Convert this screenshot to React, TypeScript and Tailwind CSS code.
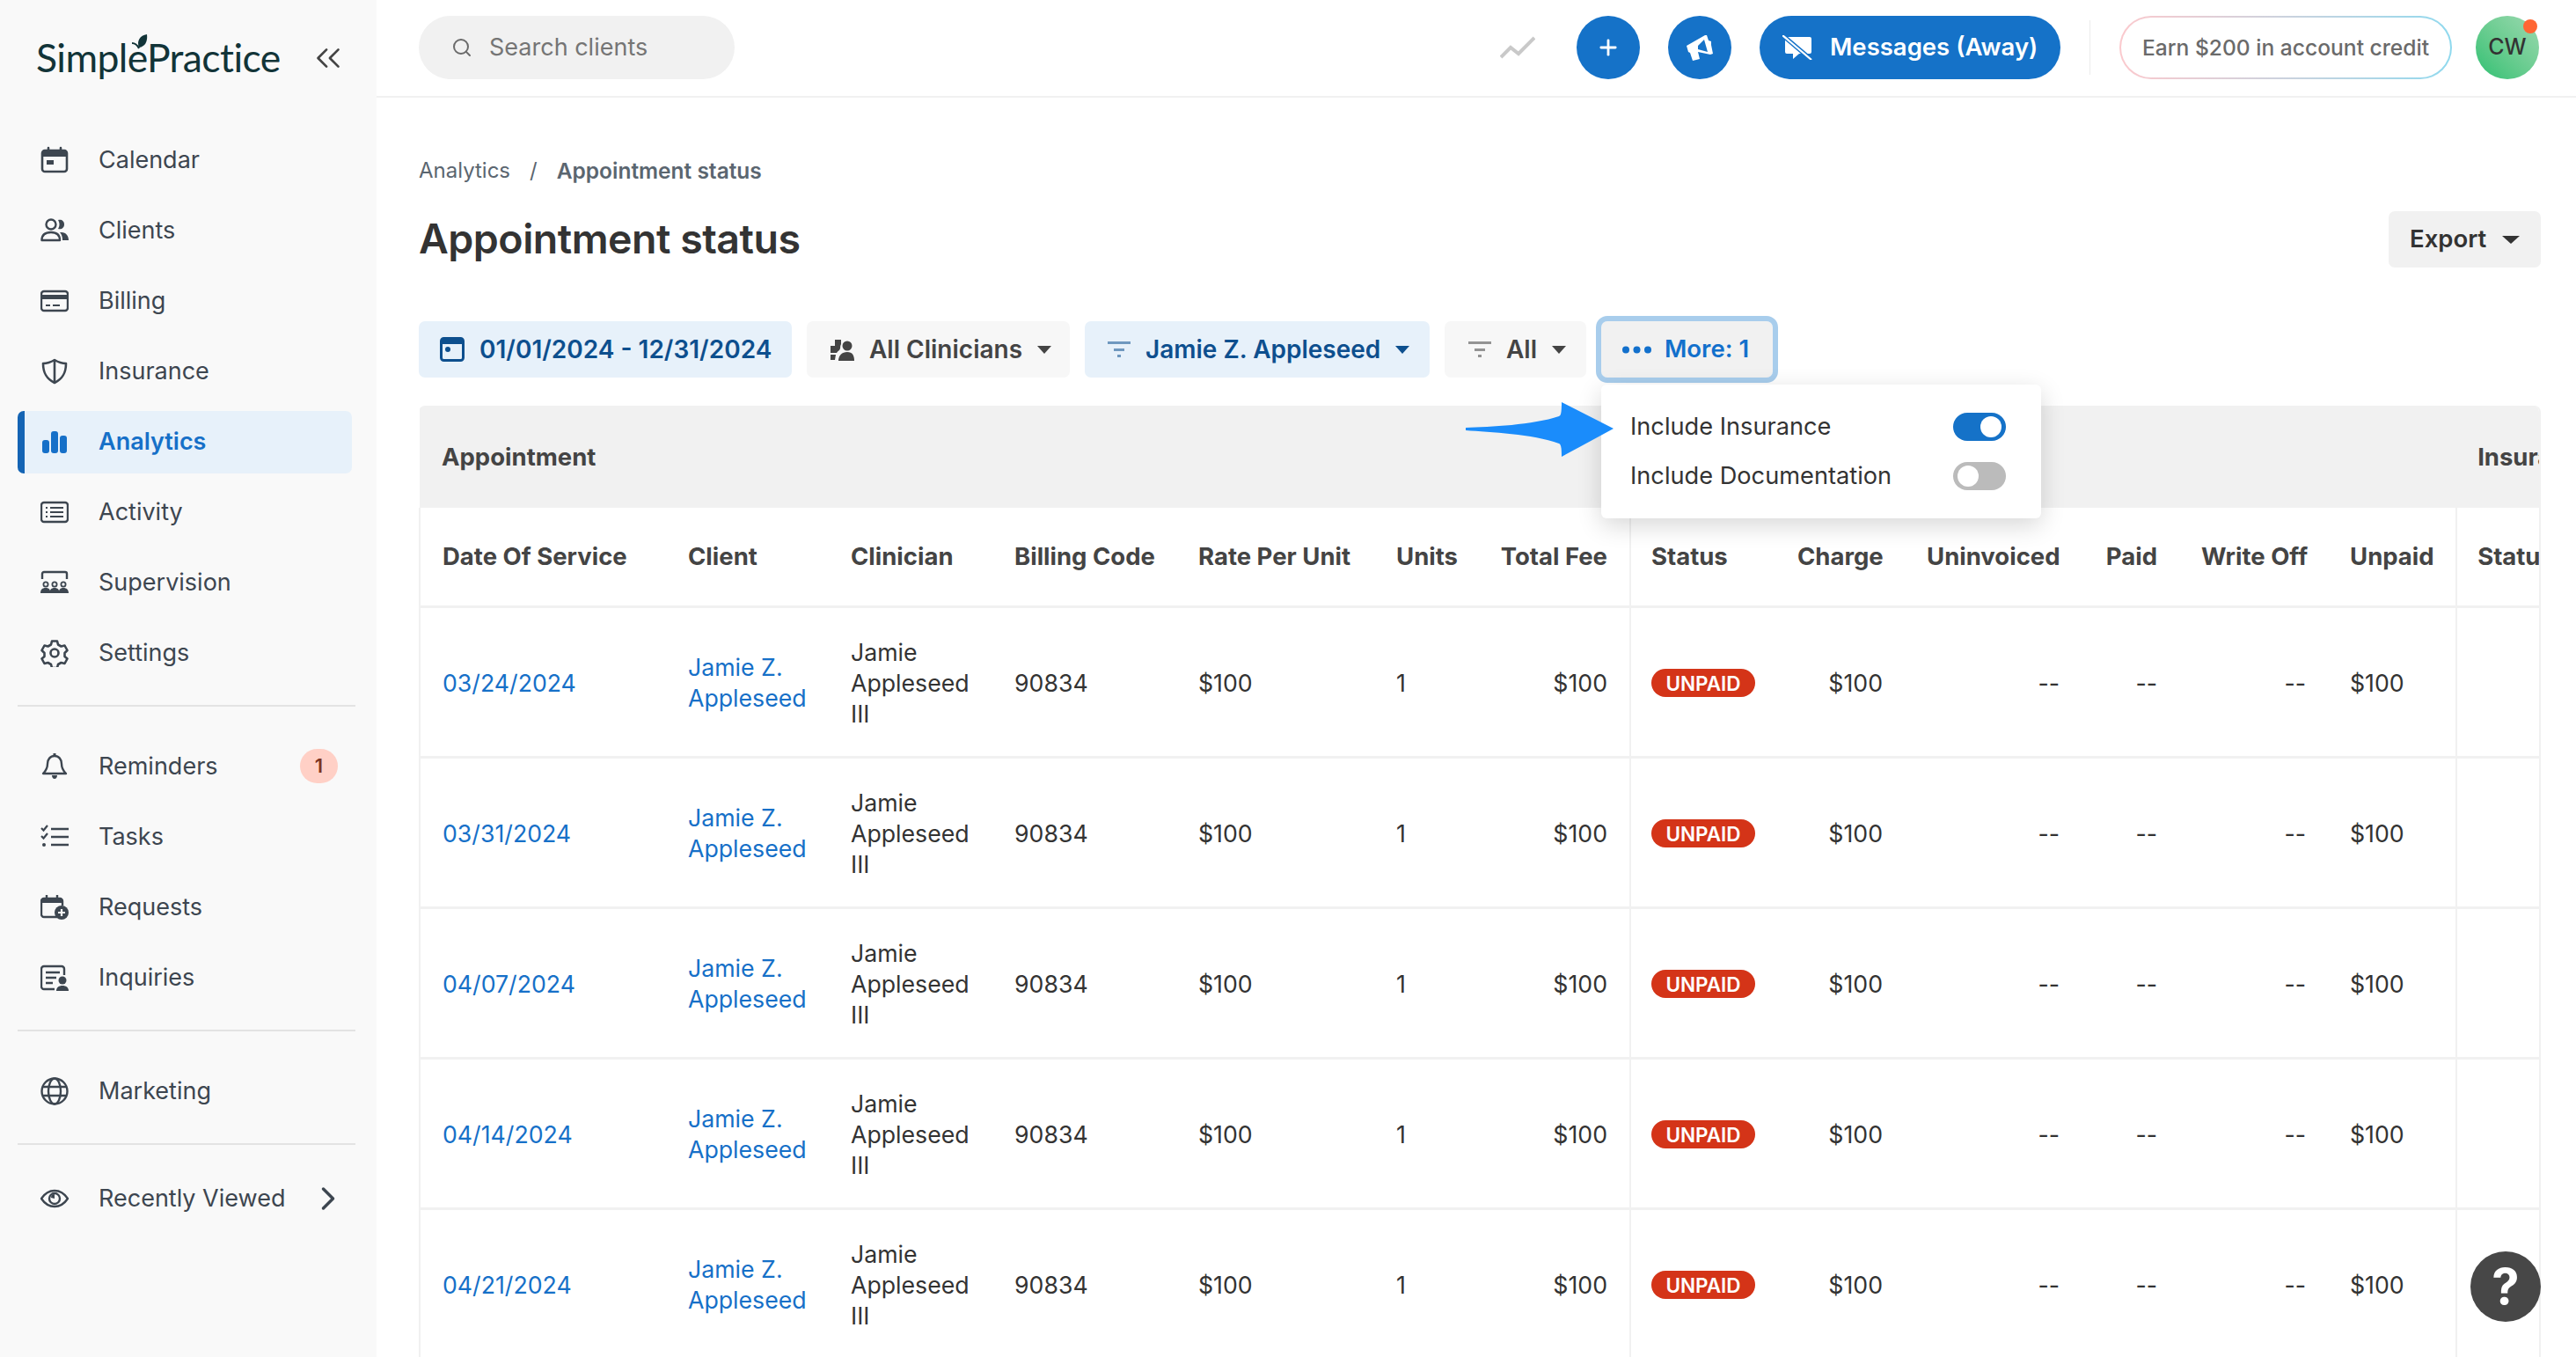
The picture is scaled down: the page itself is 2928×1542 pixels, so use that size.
import type { ReactNode } from "react";
import { ChevronRight, ChevronsLeft, Plus, Search } from "lucide-react";

const ink = "#3d4650";

function Svg({ children, w = 32, h = 32, className = "" }: { children: ReactNode; w?: number; h?: number; className?: string }) {
  return (
    <svg width={w} height={h} viewBox={`0 0 ${w} ${h}`} fill="none" className={`shrink-0 ${className}`}>
      {children}
    </svg>
  );
}

const CalendarIcon = () => (
  <Svg>
    <rect x="2" y="5" width="28" height="24" rx="3" stroke={ink} strokeWidth="2.6" />
    <path d="M2 6h28v6H2z" fill={ink} />
    <path d="M9 2v5M23 2v5" stroke={ink} strokeWidth="2.6" strokeLinecap="round" />
    <rect x="7" y="16" width="8" height="5" fill={ink} />
  </Svg>
);
const ClientsIcon = () => (
  <Svg>
    <circle cx="12" cy="9" r="5.5" stroke={ink} strokeWidth="2.4" />
    <path d="M1.5 27c0-6 4-9 10.500-9s10 3 10 9z" stroke={ink} strokeWidth="2.4" strokeLinejoin="round" />
    <path d="M20 4c4-1 7 1 7 5s-3 6-7 5c2-3 2-7 0-10zM24 18c5 0 8 4 8 9h-7c0-4-1-7-3-9z" fill={ink} />
  </Svg>
);
const BillingIcon = () => (
  <Svg>
    <rect x="1" y="5" width="30" height="22" rx="3" stroke={ink} strokeWidth="2.4" />
    <path d="M1 9h30v5H1z" fill={ink} />
    <path d="M6 21h5M14 21h8" stroke={ink} strokeWidth="2.2" />
  </Svg>
);
const InsuranceIcon = () => (
  <Svg>
    <path d="M16 3c5 3 9 4 13 4 0 10-3 17-13 22C6 24 3 17 3 7c4 0 8-1 13-4zM16 3v26" stroke={ink} strokeWidth="2.6" strokeLinejoin="round" />
  </Svg>
);
const AnalyticsIcon = () => (
  <Svg>
    <rect x="2" y="14" width="8" height="15" rx="3" fill="#1670c8" />
    <rect x="12" y="4" width="8" height="25" rx="3" fill="#1670c8" />
    <rect x="22" y="9" width="8" height="20" rx="3" fill="#1670c8" />
  </Svg>
);
const ActivityIcon = () => (
  <Svg>
    <rect x="1" y="5" width="30" height="22" rx="3" stroke={ink} strokeWidth="2.4" />
    <path d="M6 11h2M6 16h2M6 21h2M11 11h15M11 16h15M11 21h15" stroke={ink} strokeWidth="2.2" />
  </Svg>
);
const SupervisionIcon = () => (
  <Svg>
    <path d="M2 12V6a2 2 0 0 1 2-2h24a2 2 0 0 1 2 2v6" stroke={ink} strokeWidth="2.4" />
    <circle cx="6" cy="18" r="2.600" stroke={ink} strokeWidth="1.800" />
    <circle cx="16" cy="18" r="2.600" stroke={ink} strokeWidth="1.800" />
    <circle cx="26" cy="18" r="2.600" stroke={ink} strokeWidth="1.800" />
    <path d="M0 28c0-4 2-6 6-6s5 2 5.500 6zM10.500 28c0-4 2-6 5.500-6s5.500 2 5.500 6zM20.500 28c.5-4 2-6 5.500-6s6 2 6 6z" fill={ink} />
  </Svg>
);
const SettingsIcon = () => (
  <Svg>
    <circle cx="16" cy="16" r="4.500" stroke={ink} strokeWidth="2.600" />
    <path d="M13 2.500h6l1 4 3.500 2 4-1 3 5.500-3 3v4l3 2.500-3 5.500-4-1-3.500 2-1 4h-6l-1-4-3.500-2-4 1-3-5.500 3-2.500v-4l-3-3 3-5.500 4 1 3.500-2z" stroke={ink} strokeWidth="2.600" strokeLinejoin="round" />
  </Svg>
);
const BellIcon = () => (
  <Svg>
    <path d="M16 4c-5 0-8 4-8 9 0 5-2 8-5 11h26c-3-3-5-6-5-11 0-5-3-9-8-9z" stroke={ink} strokeWidth="2.400" strokeLinejoin="round" />
    <path d="M13 26h6c0 2-1 4-3 4s-3-2-3-4zM14.500 1h3v3h-3z" fill={ink} />
  </Svg>
);
const TasksIcon = () => (
  <Svg>
    <path d="M1 6l2.500 2.500L8 3M1 15l2.500 2.500L8 12" stroke={ink} strokeWidth="2.200" />
    <circle cx="4" cy="25" r="2" fill={ink} />
    <path d="M12 7h20M12 16h20M12 25h20" stroke={ink} strokeWidth="2.400" />
  </Svg>
);
const RequestsIcon = () => (
  <Svg>
    <path d="M19 27H4a3 3 0 0 1-3-3V9a3 3 0 0 1 3-3h18a3 3 0 0 1 3 3v5" stroke={ink} strokeWidth="2.400" />
    <path d="M2 6h23v5H2z" fill={ink} />
    <path d="M7 2v5M19 2v5" stroke={ink} strokeWidth="2.400" />
    <circle cx="24" cy="22" r="8" fill={ink} />
    <path d="M24 18v8M20 22h8" stroke="#f9f9f9" strokeWidth="2.200" />
  </Svg>
);
const InquiriesIcon = () => (
  <Svg>
    <path d="M16 29H4a3 3 0 0 1-3-3V6a3 3 0 0 1 3-3h20a3 3 0 0 1 3 3v7" stroke={ink} strokeWidth="2.400" />
    <path d="M6 10h16M6 16h12M6 22h8" stroke={ink} strokeWidth="2.400" />
    <circle cx="25" cy="19" r="4.500" fill={ink} />
    <path d="M18 31c0-4 3-6 7-6s7 2 7 6z" fill={ink} />
  </Svg>
);
const GlobeIcon = () => (
  <Svg>
    <circle cx="16" cy="16" r="14.500" stroke={ink} strokeWidth="2.400" />
    <ellipse cx="16" cy="16" rx="7" ry="14.500" stroke={ink} strokeWidth="2.400" />
    <path d="M2 11h28M2 21h28" stroke={ink} strokeWidth="2.400" />
  </Svg>
);
const EyeIcon = () => (
  <Svg>
    <path d="M1 16c4-6 9-9 15-9s11 3 15 9c-4 6-9 9-15 9S5 22 1 16z" stroke={ink} strokeWidth="2.400" />
    <circle cx="16" cy="16" r="6" stroke={ink} strokeWidth="2.400" />
    <path d="M12 15a4 4 0 0 1 4-4v5z" fill={ink} />
  </Svg>
);

function Caret({ color = "#333333", w = 16 }: { color?: string; w?: number }) {
  return (
    <svg width={w} height="9" viewBox="0 0 16 9" preserveAspectRatio="none" className="shrink-0">
      <path d="M0 0h16L8 9z" fill={color} />
    </svg>
  );
}

function FilterLines({ color }: { color: string }) {
  return (
    <svg width="26" height="20" viewBox="0 0 26 20" className="shrink-0">
      <path d="M0 1h26v3H0z" fill={color} opacity="0.55" />
      <path d="M7 9h12v3H7z" fill={color} opacity="0.55" />
      <path d="M11 16h4v3h-4z" fill={color} opacity="0.55" />
    </svg>
  );
}

const mainNav: [string, ReactNode][] = [
  ["Calendar", <CalendarIcon />],
  ["Clients", <ClientsIcon />],
  ["Billing", <BillingIcon />],
  ["Insurance", <InsuranceIcon />],
  ["Analytics", <AnalyticsIcon />],
  ["Activity", <ActivityIcon />],
  ["Supervision", <SupervisionIcon />],
  ["Settings", <SettingsIcon />],
];

function NavRow({ icon, label, active, children }: { icon: ReactNode; label: string; active?: boolean; children?: ReactNode }) {
  if (active) {
    return (
      <div className="mx-[20px] my-[4.500px] flex h-[71px] w-[380px] items-center gap-[34px] rounded-[7px] border-l-[8px] border-[#1464b4] bg-[#e7f1fa] pl-[18px]">
        {icon}
        <span className="text-[27px] font-semibold text-[#1670c8]">{label}</span>
      </div>
    );
  }
  return (
    <div className="mx-[20px] flex h-[80px] w-[364px] items-center gap-[34px] pl-[26px]">
      {icon}
      <span className="whitespace-nowrap text-[27px] text-[#3d4650]">{label}</span>
      {children}
    </div>
  );
}

function Sidebar() {
  return (
    <aside className="flex h-full w-[428px] shrink-0 flex-col bg-[#f9f9f9]">
      <div className="flex h-[142px] items-start pl-[41px] pr-[32px] pt-[33px]">
        <div className="relative font-['Lato',sans-serif] text-[44.500px] leading-[64px] tracking-[-0.6px] text-[#123438]">
          SimplePractice
          <svg width="18" height="17" viewBox="0 0 18 17" className="absolute left-[109px] top-[6px]">
            <path d="M8 15C5 8 9 1 17 0c1 8-2 14-9 15z" fill="#123438" />
            <path d="M0 10c3 0 6 2 8 6" stroke="#123438" strokeWidth="2" fill="none" />
          </svg>
        </div>
        <ChevronsLeft size={46} strokeWidth={1.4} color="#444444" className="ml-auto mt-[10px] shrink-0" />
      </div>
      <nav>
        {mainNav.map(([label, icon]) => (
          <NavRow key={label} label={label} icon={icon} active={label === "Analytics"} />
        ))}
      </nav>
      <hr className="mx-[20px] mb-[28px] mt-[19px] w-[384px] border-t-2 border-[#e3e3e3]" />
      <NavRow label="Reminders" icon={<BellIcon />}>
        <span className="ml-auto mt-[-2px] flex h-[39px] w-[43px] items-center justify-center rounded-full bg-[#ffd0c6] text-[22px] font-semibold text-[#7c3323]">1</span>
      </NavRow>
      <NavRow label="Tasks" icon={<TasksIcon />} />
      <NavRow label="Requests" icon={<RequestsIcon />} />
      <NavRow label="Inquiries" icon={<InquiriesIcon />} />
      <hr className="mx-[20px] mb-[28px] mt-[19px] w-[384px] border-t-2 border-[#e3e3e3]" />
      <NavRow label="Marketing" icon={<GlobeIcon />} />
      <hr className="mx-[20px] mb-[21px] mt-[19px] w-[384px] border-t-2 border-[#e3e3e3]" />
      <NavRow label="Recently Viewed" icon={<EyeIcon />}>
        <ChevronRight size={44} strokeWidth={1.9} color={ink} className="ml-[-7px] shrink-0" />
      </NavRow>
    </aside>
  );
}

function TopBar() {
  return (
    <header className="flex h-[111px] shrink-0 items-center border-b-2 border-[#f1f1f1] pb-px pl-[48px] pr-[42px]">
      <div className="flex h-[72px] w-[359px] items-center gap-[19px] rounded-full bg-[#f1f1f1] pl-[37px]">
        <Search size={24} strokeWidth={2} color="#6b6b6b" />
        <span className="text-[27px] text-[#757575]">Search clients</span>
      </div>
      <svg width="40" height="26" viewBox="0 0 40 26" className="ml-auto mr-[47px] shrink-0">
        <path d="M1 24l11-11 9 7L39 2" stroke="#c9c9c9" strokeWidth="4" fill="none" />
      </svg>
      <button className="flex h-[72px] w-[72px] shrink-0 items-center justify-center rounded-full bg-[#1572c8]">
        <Plus size={28} strokeWidth={2.4} color="#ffffff" />
      </button>
      <button className="ml-[32px] flex h-[72px] w-[72px] shrink-0 items-center justify-center rounded-full bg-[#1572c8]">
        <svg width="32" height="32" viewBox="0 0 32 32">
          <path d="M1 14L22 2l2 0 2 6 3 1 0 4 2 10-3 1-14-3 2 8-8 2-3-9-2-1z" fill="#ffffff" />
          <path d="M14 14l7-7 4 14-11-3z" fill="#1572c8" />
        </svg>
      </button>
      <button className="ml-[32px] flex h-[72px] w-[342px] shrink-0 items-center gap-[20px] rounded-full bg-[#1572c8] pl-[26px]">
        <svg width="34" height="28" viewBox="0 0 34 28" className="shrink-0">
          <path d="M5 2h26a2 2 0 0 1 2 2v15a2 2 0 0 1-2 2H19l-7 6v-6H5a2 2 0 0 1-2-2V4a2 2 0 0 1 2-2z" fill="#ffffff" />
          <path d="M0 0l33 28" stroke="#1572c8" strokeWidth="5" />
          <path d="M0 0l33 28" stroke="#ffffff" strokeWidth="2.200" />
        </svg>
        <span className="text-[27.500px] font-semibold text-white">Messages (Away)</span>
      </button>
      <div className="mx-[33px] h-[62px] w-px shrink-0 bg-[#ececec]" />
      <div className="h-[72px] w-[378px] shrink-0 rounded-full bg-gradient-to-r from-[#fbc9cd] to-[#8fd9ee] p-[2px]">
        <div className="flex h-full items-center justify-center rounded-full bg-white text-[24.600px] font-medium text-[#6a6a6a]">Earn $200 in account credit</div>
      </div>
      <div className="relative ml-[27px] flex h-[72px] w-[72px] shrink-0 items-center justify-center rounded-full bg-gradient-to-tr from-[#24c072] to-[#9ad9b0] text-[25px] font-medium text-[#333333]">
        CW
        <span className="absolute right-[2px] top-[4px] h-[16px] w-[16px] rounded-full bg-[#ff6633]" />
      </div>
    </header>
  );
}

function FilterChip({ children, blue, className = "" }: { children: ReactNode; blue?: boolean; className?: string }) {
  return (
    <div className={`flex h-[64px] shrink-0 items-center rounded-[7px] text-[28px] font-semibold ${blue ? "bg-[#e7f1fa] text-[#0d4f8e]" : "bg-[#f7f7f7] text-[#444444]"} ${className}`}>
      {children}
    </div>
  );
}

function Filters() {
  return (
    <div className="relative mt-[64px] flex items-center gap-[17px]">
      <FilterChip blue className="w-[424px] gap-[17px] pl-[24px]">
        <svg width="28" height="28" viewBox="0 0 28 28" className="shrink-0">
          <rect x="1.500" y="1.500" width="25" height="25" rx="3" stroke="#0d4f8e" strokeWidth="3" fill="none" />
          <path d="M1 2h26v6H1z" fill="#0d4f8e" />
          <circle cx="9" cy="14" r="3" fill="#0d4f8e" />
        </svg>
        01/01/2024 - 12/31/2024
      </FilterChip>
      <FilterChip className="w-[299px] gap-[17px] pl-[26px]">
        <svg width="28" height="26" viewBox="0 0 28 26" className="shrink-0">
          <path d="M6 9V2h7v5a8 8 0 0 0-1 5l-1 2a10 10 0 0 0-3 3H1v-8zM1 19h6l-1 6H1z" fill="#444444" />
          <circle cx="20" cy="9" r="5.500" fill="#444444" />
          <path d="M10 26c0-6 4-10 10-10s8 4 8 10z" fill="#444444" />
        </svg>
        <span>All Clinicians</span>
        <Caret color="#444444" />
      </FilterChip>
      <FilterChip blue className="w-[392px] gap-[17px] pl-[26px]">
        <FilterLines color="#0d4f8e" />
        <span>Jamie Z. Appleseed</span>
        <Caret color="#0d4f8e" />
      </FilterChip>
      <FilterChip className="w-[161px] gap-[17px] pl-[27px]">
        <FilterLines color="#444444" />
        <span>All</span>
        <Caret color="#444444" />
      </FilterChip>
      <div className="relative">
        <div className="flex h-[64px] w-[195px] items-center gap-[15px] rounded-[7px] bg-[#f1f1f1] pl-[24px] text-[27.500px] font-semibold text-[#1270cc] outline-[6px] outline-[#a8cdec]">
          <svg width="33" height="9" viewBox="0 0 33 9" className="shrink-0">
            <circle cx="4" cy="4.500" r="4" fill="#1270cc" />
            <circle cx="16.500" cy="4.500" r="4" fill="#1270cc" />
            <circle cx="29" cy="4.500" r="4" fill="#1270cc" />
          </svg>
          More: 1
        </div>
        <div className="absolute left-0 top-[72px] z-20 flex h-[152px] w-[500px] flex-col justify-center gap-[24px] rounded-[6px] bg-white pl-[33px] pr-[40px] text-[27.200px] text-[#333333] shadow-[0_8px_28px_rgba(0,0,0,0.16)]">
          <div className="flex h-[32px] items-center justify-between">
            Include Insurance
            <span className="flex h-[32px] w-[60px] items-center justify-end rounded-full bg-[#1572c8] pr-[5px]">
              <span className="h-[24px] w-[24px] rounded-full bg-white" />
            </span>
          </div>
          <div className="flex h-[32px] items-center justify-between">
            Include Documentation
            <span className="flex h-[32px] w-[60px] items-center rounded-full bg-[#bbbbbb] pl-[5px]">
              <span className="h-[24px] w-[24px] rounded-full bg-white" />
            </span>
          </div>
        </div>
        {/* annotation arrow */}
        <svg width="168" height="62" viewBox="0 0 168 62" className="absolute left-[-154px] top-[92px] z-30">
          <path d="M0 29c28-1 76-3 106-13 2-1 3-3 3-16l59 30-59 32c0-12-1-14-3-15C76 36 28 34 0 32z" fill="#1a8cfb" />
        </svg>
      </div>
    </div>
  );
}

const colWidths = [280, 185, 186, 209, 225, 118, 173, 165, 147, 201, 111, 169, 146, 200];
const head = ["Date Of Service", "Client", "Clinician", "Billing Code", "Rate Per Unit", "Units", "Total Fee", "Status", "Charge", "Uninvoiced", "Paid", "Write Off", "Unpaid", "Status"];
const rightAligned = new Set([6, 8, 9, 10, 11]);
const dates = ["03/24/2024", "03/31/2024", "04/07/2024", "04/14/2024", "04/21/2024"];

const cell = "px-[25px] pt-[3px] align-middle";

function ReportTable() {
  const total = colWidths.reduce((a, b) => a + b, 0);
  return (
    <div className="mt-[32px] w-[2412px] overflow-hidden rounded-t-[7px] border-r-2 border-[#f1f1f1]">
      <table className="table-fixed border-collapse text-[26.700px] leading-[35px] text-[#333333]" style={{ width: total }}>
        <colgroup>
          {colWidths.map((w, i) => (
            <col key={i} style={{ width: w }} />
          ))}
        </colgroup>
        <thead>
          <tr className="h-[116px] bg-[#f1f1f1] text-[27.500px] font-semibold text-[#444444]">
            <th colSpan={13} className="px-[25px] text-left align-middle">Appointment</th>
            <th className="whitespace-nowrap px-[24px] text-left">Insurance</th>
          </tr>
          <tr className="h-[112px] border-b-[3px] border-[#f1f1f1] text-[27.500px] font-semibold text-[#444444]">
            {head.map((h, i) => (
              <th key={i} className={`whitespace-nowrap align-middle ${i === 7 || i === 13 ? "px-[23px]" : "px-[25px]"} ${rightAligned.has(i) ? "text-right" : "text-left"} ${i === 0 || i === 7 || i === 13 ? "border-l-2" : ""} border-[#f1f1f1]`}>
                {h}
              </th>
            ))}
          </tr>
        </thead>
        <tbody>
          {dates.map((d) => (
            <tr key={d} className="h-[171px] border-b-[3px] border-[#f1f1f1]">
              <td className={`${cell} border-l-2 border-[#f1f1f1] text-[#1670c8]`}>{d}</td>
              <td className={`${cell} text-[#1670c8]`}>Jamie Z. Appleseed</td>
              <td className={cell}>Jamie Appleseed III</td>
              <td className={cell}>90834</td>
              <td className={cell}>$100</td>
              <td className={cell}>1</td>
              <td className={`${cell} text-right`}>$100</td>
              <td className="border-l-2 border-[#f1f1f1] px-[23px] pt-[3px] align-middle">
                <span className="flex h-[32px] w-[118px] items-center justify-center rounded-full bg-[#d43418] text-[22.500px] font-semibold text-white">UNPAID</span>
              </td>
              <td className={`${cell} text-right`}>$100</td>
              <td className={`${cell} text-right`}>--</td>
              <td className={`${cell} text-right`}>--</td>
              <td className={`${cell} text-right`}>--</td>
              <td className={cell}>$100</td>
              <td className={`${cell} border-l-2 border-[#f1f1f1]`} />
            </tr>
          ))}
        </tbody>
      </table>
    </div>
  );
}

export default function App() {
  return (
    <div className="relative flex h-[1542px] w-[2928px] overflow-hidden bg-white font-['Inter',sans-serif]">
      <Sidebar />
      <main className="flex min-w-0 flex-1 flex-col">
        <TopBar />
        <div className="pl-[48px] pr-[40px]">
          <div className="mt-[68px] flex items-center gap-[22px] text-[24px] leading-[30px] text-[#5b6670]">
            <span>Analytics</span>
            <span>/</span>
            <span className="text-[24.500px] font-semibold">Appointment status</span>
          </div>
          <div className="mt-[28px] flex h-[64px] items-start justify-between">
            <h1 className="text-[46.500px] font-semibold tracking-[-0.5px] text-[#333333]">Appointment status</h1>
            <div className="mt-[3px] flex h-[64px] w-[173px] items-center gap-[18px] rounded-[7px] bg-[#f1f1f1] pl-[24px] text-[27.500px] font-semibold text-[#333333]">
              Export
              <Caret w={20} />
            </div>
          </div>
          <Filters />
          <ReportTable />
        </div>
      </main>
      <button className="absolute left-[2808px] top-[1422px] z-30 flex h-[80px] w-[80px] items-center justify-center rounded-full bg-[#474747] text-[56px] font-bold text-white">?</button>
    </div>
  );
}
